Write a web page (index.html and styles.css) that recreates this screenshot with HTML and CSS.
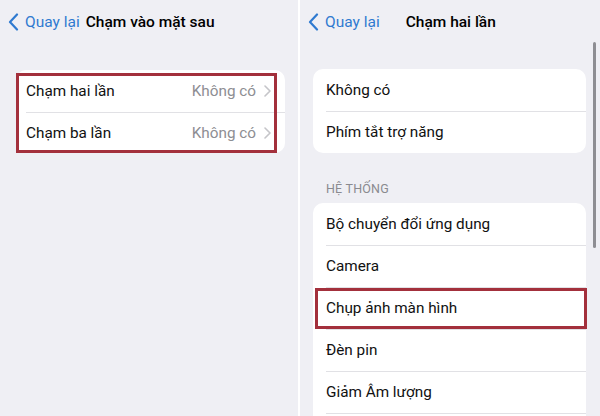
FILE: index.html
```html
<!DOCTYPE html>
<html lang="vi">
<head>
<meta charset="utf-8">
<link rel="stylesheet" href="styles.css">
</head>
<body>
  <div class="panel panel-left">
    <div class="nav nav-left">
      <svg class="chev" width="11" height="18" viewBox="0 0 11 18"><polyline points="9,1.5 2,9 9,16.5" fill="none" stroke="#2f7ad0" stroke-width="2.2" stroke-linecap="round" stroke-linejoin="round"/></svg>
      <span class="back">Quay lại</span>
      <span class="title title-left">Chạm vào mặt sau</span>
    </div>
    <div class="card card-left">
      <div class="row">
        <span class="label">Chạm hai lần</span>
        <span class="value">Không có</span>
        <svg class="disc" width="7" height="12" viewBox="0 0 7 12"><polyline points="1,1 6,6 1,11" fill="none" stroke="#c5c5c9" stroke-width="1.6" stroke-linecap="round" stroke-linejoin="round"/></svg>
      </div>
      <div class="row">
        <span class="label">Chạm ba lần</span>
        <span class="value">Không có</span>
        <svg class="disc" width="7" height="12" viewBox="0 0 7 12"><polyline points="1,1 6,6 1,11" fill="none" stroke="#c5c5c9" stroke-width="1.6" stroke-linecap="round" stroke-linejoin="round"/></svg>
      </div>
      <div class="mark mark-left"></div>
    </div>
  </div>
  <div class="panel panel-right">
    <div class="nav nav-right">
      <svg class="chev" width="11" height="18" viewBox="0 0 11 18"><polyline points="9,1.5 2,9 9,16.5" fill="none" stroke="#2f7ad0" stroke-width="2.2" stroke-linecap="round" stroke-linejoin="round"/></svg>
      <span class="back">Quay lại</span>
      <span class="title title-right">Chạm hai lần</span>
    </div>
    <div class="card card-right">
      <div class="row"><span class="label">Không có</span></div>
      <div class="row"><span class="label">Phím tắt trợ năng</span></div>
    </div>
    <div class="section-title">HỆ THỐNG</div>
    <div class="card card-right">
      <div class="row"><span class="label">Bộ chuyển đổi ứng dụng</span></div>
      <div class="row"><span class="label">Camera</span></div>
      <div class="row row-marked"><span class="label">Chụp ảnh màn hình</span><div class="mark mark-right"></div></div>
      <div class="row"><span class="label">Đèn pin</span></div>
      <div class="row"><span class="label">Giảm Âm lượng</span></div>
      <div class="row"></div>
    </div>
    <div class="scrollbar"></div>
  </div>
</body>
</html>
```
FILE: styles.css
```css
* { box-sizing: border-box; }
html, body { margin: 0; padding: 0; }
body {
  width: 600px;
  height: 416px;
  overflow: hidden;
  display: flex;
  background: #ffffff;
  font-family: Roboto, "Noto Sans", "Liberation Sans", sans-serif;
  color: #111;
}
.panel {
  position: relative;
  height: 416px;
  overflow: hidden;
  background: #efeff4;
}
.panel-left { width: 298px; }
.panel-right { width: 300px; margin-left: 2px; }

.nav {
  height: 44px;
  display: flex;
  align-items: center;
  padding-left: 8px;
  font-size: 15.5px;
}
.chev { flex: none; }
.back { color: #2f7ad0; margin-left: 6px; }
.title { font-weight: 500; color: #000; }
.title-left { margin-left: 6px; }
.title-right { margin-left: 26px; }

.card {
  background: #fff;
  border-radius: 10px;
  position: relative;
}
.card-left { margin: 26px 13px 0 16px; }
.card-right { margin: 25px 14px 0 13px; }
.card-right + .section-title + .card-right { margin-top: 0; }

.row {
  position: relative;
  height: 42px;
  display: flex;
  align-items: center;
  font-size: 15.3px;
}
.card-left .row { padding: 0 14px 0 10px; }
.card-right .row { padding: 0 14px 0 13px; }
.row + .row::before {
  content: "";
  position: absolute;
  top: 0;
  right: 0;
  height: 1px;
  background: #e1e1e5;
}
.card-left .row + .row::before { left: 10px; }
.card-right .row + .row::before { left: 13px; }
.card-left .row + .row { height: 41px; }

.label { flex: 1; }
.value { color: #8e8e93; margin-right: 8px; }
.disc { flex: none; }

.section-title {
  padding: 28px 0 7px 26px;
  line-height: 15px;
  font-size: 12.5px;
  color: #8a8a8f;
  letter-spacing: 0.2px;
}

.mark {
  position: absolute;
  border: 3px solid #a3303c;
  pointer-events: none;
}
.mark-left { top: 3px; left: 0; width: 261px; height: 80px; }
.mark-right { top: 1px; left: 2px; right: -1px; bottom: 0; }

.scrollbar {
  position: absolute;
  top: 42px;
  right: 4px;
  width: 3px;
  height: 206px;
  border-radius: 2px;
  background: #8e8e93;
}
```
